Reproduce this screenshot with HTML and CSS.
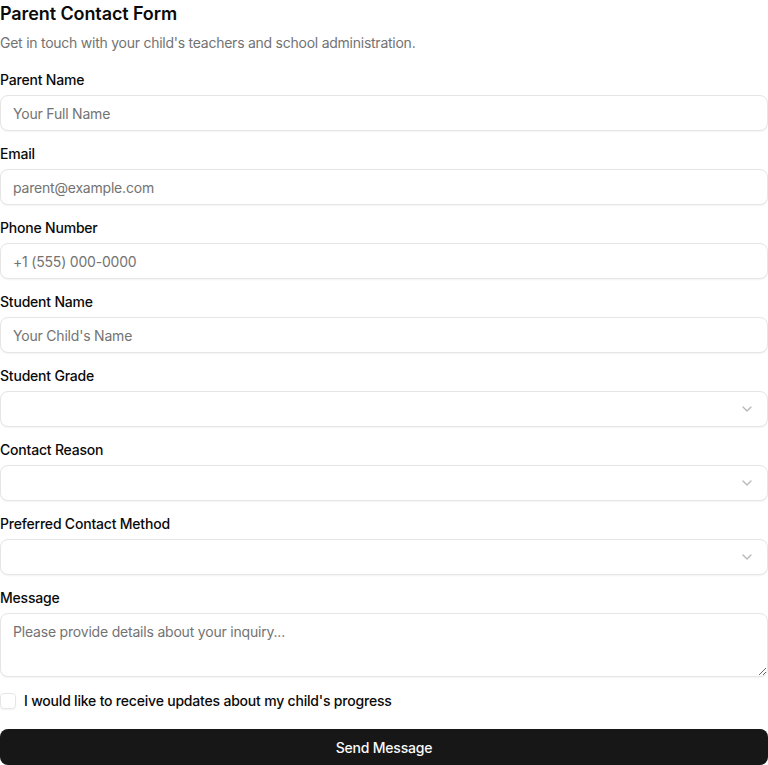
FILE: index.html
```html
<!DOCTYPE html>
<html lang="en">
<head>
<meta charset="utf-8">
<title>Parent Contact Form</title>
<link rel="stylesheet" href="styles.css">
</head>
<body>
<form class="form">
  <div class="header">
    <h1 class="title">Parent Contact Form</h1>
    <p class="subtitle">Get in touch with your child's teachers and school administration.</p>
  </div>
  <div class="field">
    <label class="label">Parent Name</label>
    <input class="input" type="text" placeholder="Your Full Name">
  </div>
  <div class="field">
    <label class="label">Email</label>
    <input class="input" type="email" placeholder="parent@example.com">
  </div>
  <div class="field">
    <label class="label">Phone Number</label>
    <input class="input" type="tel" placeholder="+1 (555) 000-0000">
  </div>
  <div class="field">
    <label class="label">Student Name</label>
    <input class="input" type="text" placeholder="Your Child's Name">
  </div>
  <div class="field">
    <label class="label">Student Grade</label>
    <button type="button" class="select"><span></span><svg class="chev" viewBox="0 0 24 24" width="16" height="16"><path d="m6 9 6 6 6-6"/></svg></button>
  </div>
  <div class="field">
    <label class="label">Contact Reason</label>
    <button type="button" class="select"><span></span><svg class="chev" viewBox="0 0 24 24" width="16" height="16"><path d="m6 9 6 6 6-6"/></svg></button>
  </div>
  <div class="field">
    <label class="label">Preferred Contact Method</label>
    <button type="button" class="select"><span></span><svg class="chev" viewBox="0 0 24 24" width="16" height="16"><path d="m6 9 6 6 6-6"/></svg></button>
  </div>
  <div class="field">
    <label class="label">Message</label>
    <textarea class="textarea" placeholder="Please provide details about your inquiry..."></textarea>
  </div>
  <div class="check-row">
    <span class="checkbox"></span>
    <span class="check-label">I would like to receive updates about my child's progress</span>
  </div>
  <button type="submit" class="submit">Send Message</button>
</form>
</body>
</html>
```
FILE: styles.css
```css
* { box-sizing: border-box; }
html, body { margin: 0; padding: 0; background: #fff; }
body {
  font-family: Inter, "Noto Sans", sans-serif;
  color: #0a0a0a;
  width: 768px;
  letter-spacing: -0.2px;
}
.form {
  display: flex;
  flex-direction: column;
  gap: 16px;
}
.header { display: flex; flex-direction: column; gap: 5px; margin-bottom: 4px; }
.title {
  margin: 0;
  font-size: 18px;
  line-height: 28px;
  font-weight: 600;
  letter-spacing: -0.1px;
}
.subtitle {
  margin: 0;
  font-size: 14px;
  line-height: 20px;
  color: #737373;
  letter-spacing: -0.25px;
}
.field { display: flex; flex-direction: column; gap: 8px; }
.label {
  font-size: 14px;
  line-height: 14px;
  font-weight: 500;
}
.input, .select, .textarea {
  width: 100%;
  height: 36px;
  border: 1px solid #e5e5e5;
  border-radius: 8px;
  background: #fff;
  padding: 0 12px;
  font-family: inherit;
  font-size: 14px;
  letter-spacing: -0.2px;
  color: #0a0a0a;
  box-shadow: 0 1px 2px rgba(0,0,0,0.05);
  outline: none;
}
.input::placeholder, .textarea::placeholder { color: #737373; }
.select {
  display: flex;
  align-items: center;
  justify-content: space-between;
  cursor: pointer;
}
.chev {
  fill: none;
  stroke: #737373;
  stroke-width: 2;
  stroke-linecap: round;
  stroke-linejoin: round;
  opacity: 0.5;
}
.textarea {
  height: 64px;
  padding: 8px 12px;
  line-height: 20px;
  resize: vertical;
  display: block;
}
.check-row {
  display: flex;
  align-items: center;
  gap: 8px;
  height: 16px;
  margin-bottom: 4px;
}
.checkbox {
  width: 16px;
  height: 16px;
  border: 1px solid #e5e5e5;
  border-radius: 4px;
  box-shadow: 0 1px 2px rgba(0,0,0,0.05);
  flex-shrink: 0;
}
.check-label {
  font-size: 14px;
  line-height: 14px;
  font-weight: 500;
}
.submit {
  height: 36px;
  width: 100%;
  border: none;
  border-radius: 8px;
  background: #171717;
  color: #fafafa;
  font-family: inherit;
  font-size: 14px;
  font-weight: 500;
  letter-spacing: -0.2px;
  cursor: pointer;
}
```
